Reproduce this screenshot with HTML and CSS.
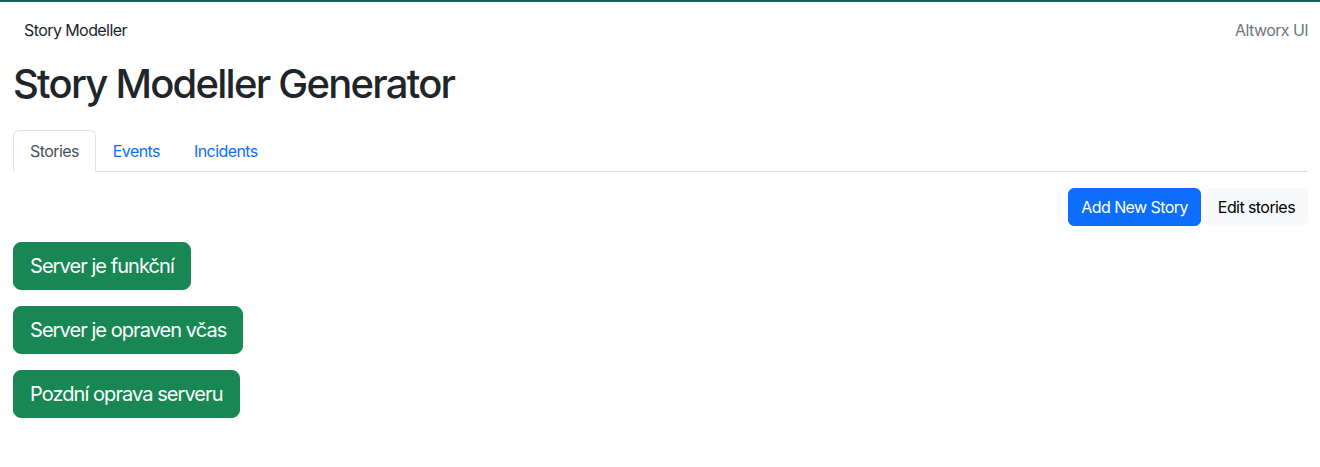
FILE: index.html
```html
<!DOCTYPE html>
<html lang="cs">
<head>
<meta charset="utf-8">
<title>Story Modeller Generator</title>
<link rel="stylesheet" href="styles.css">
</head>
<body>
<header class="navbar">
  <span class="brand">Story Modeller</span>
  <span class="app">Altworx UI</span>
</header>
<main class="page">
  <h1 class="title">Story Modeller Generator</h1>
  <nav class="tabs">
    <a class="tab active">Stories</a>
    <a class="tab">Events</a>
    <a class="tab">Incidents</a>
  </nav>
  <div class="toolbar">
    <button class="btn btn-primary">Add New Story</button>
    <button class="btn btn-light">Edit stories</button>
  </div>
  <div class="stories">
    <button class="btn btn-lg btn-success">Server je funkční</button>
    <button class="btn btn-lg btn-success">Server je opraven včas</button>
    <button class="btn btn-lg btn-success">Pozdní oprava serveru</button>
  </div>
</main>
</body>
</html>
```

FILE: styles.css
```css
* { box-sizing: border-box; }
html, body { margin: 0; }
body {
  font-family: Inter, "Noto Sans", "Liberation Sans", sans-serif;
  font-size: 16px;
  line-height: 1.5;
  letter-spacing: -0.036em;
  color: #212529;
  background: #fff;
  border-top: 2px solid #1a5f5f;
}
.navbar {
  display: flex;
  justify-content: space-between;
  align-items: center;
  height: 56px;
  padding: 0 12px 0 24px;
}
.brand { color: #212529; }
.app { color: #6c757d; }
.page { padding: 0 12px 0 13px; }
.title {
  margin: 2px 0 0 0;
  font-size: 40px;
  font-weight: 500;
  line-height: 1.2;
  height: 48px;
  letter-spacing: -0.044em;
}
.tabs {
  display: flex;
  margin-top: 22px;
  border-bottom: 1px solid #dee2e6;
}
.tab {
  display: block;
  padding: 8px 16px;
  margin-bottom: -1px;
  border: 1px solid transparent;
  border-top-left-radius: 6px;
  border-top-right-radius: 6px;
  color: #0d6efd;
  cursor: pointer;
}
.tab.active {
  color: #495057;
  border-color: #dee2e6 #dee2e6 #fff;
  background: #fff;
}
.toolbar {
  display: flex;
  justify-content: flex-end;
  gap: 4px;
  margin-top: 16px;
}
.btn {
  font-family: inherit;
  font-size: 16px;
  line-height: 24px;
  letter-spacing: -0.036em;
  padding: 6px 12px;
  border: 1px solid transparent;
  border-radius: 6px;
  cursor: pointer;
}
.btn-primary { background: #0d6efd; border-color: #0d6efd; color: #fff; }
.btn-light { background: #f8f9fa; border-color: #f8f9fa; color: #000; }
.stories {
  display: flex;
  flex-direction: column;
  align-items: flex-start;
  gap: 16px;
  margin-top: 16px;
}
.btn-lg {
  font-size: 20px;
  line-height: 30px;
  letter-spacing: -0.047em;
  padding: 8px 16px;
  border-radius: 8px;
}
.btn-success { background: #198754; border-color: #198754; color: #fff; }
```
